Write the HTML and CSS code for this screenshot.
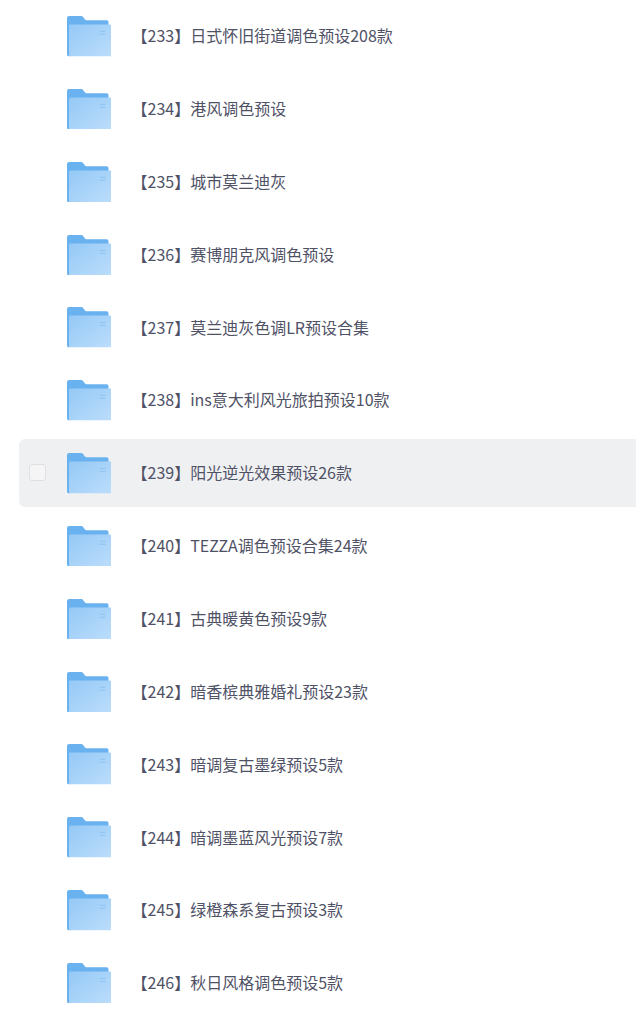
FILE: index.html
```html
<!DOCTYPE html>
<html lang="zh-CN">
<head>
    <meta charset="UTF-8">
    <meta name="viewport" content="width=device-width, initial-scale=1.0">
    <title>预设文件夹</title>
    <link rel="stylesheet" href="styles.css">
</head>
<body>

<svg class="defs" width="0" height="0">
    <defs>
        <linearGradient id="folderFront" x1="0" y1="0" x2="1" y2="1">
            <stop offset="0" stop-color="#94c9f6"/>
            <stop offset="1" stop-color="#bcddfb"/>
        </linearGradient>
        <symbol id="folder" viewBox="0 0 45 41">
            <path d="M0 2a2 2 0 0 1 2-2h12.5a2 2 0 0 1 1.6.8l1.8 2.6a2 2 0 0 0 1.6.8H40a2 2 0 0 1 2 2V12H3V41H2a2 2 0 0 1-2-2z" fill="#6ab2ef"/>
            <rect x="2" y="8.5" width="43" height="32.5" rx="1.5" fill="url(#folderFront)"/>
            <rect x="33" y="15" width="6" height="1" fill="#8cc3f2"/>
            <rect x="33" y="18" width="6" height="1" fill="#8cc3f2"/>
        </symbol>
    </defs>
</svg>

<ul class="file-list">
    <li class="file-row"><span class="check"></span><svg class="folder"><use href="#folder"/></svg><span class="name">【233】日式怀旧街道调色预设208款</span></li>
    <li class="file-row"><span class="check"></span><svg class="folder"><use href="#folder"/></svg><span class="name">【234】港风调色预设</span></li>
    <li class="file-row"><span class="check"></span><svg class="folder"><use href="#folder"/></svg><span class="name">【235】城市莫兰迪灰</span></li>
    <li class="file-row"><span class="check"></span><svg class="folder"><use href="#folder"/></svg><span class="name">【236】赛博朋克风调色预设</span></li>
    <li class="file-row"><span class="check"></span><svg class="folder"><use href="#folder"/></svg><span class="name">【237】莫兰迪灰色调LR预设合集</span></li>
    <li class="file-row"><span class="check"></span><svg class="folder"><use href="#folder"/></svg><span class="name">【238】ins意大利风光旅拍预设10款</span></li>
    <li class="file-row active"><span class="check"></span><svg class="folder"><use href="#folder"/></svg><span class="name">【239】阳光逆光效果预设26款</span></li>
    <li class="file-row"><span class="check"></span><svg class="folder"><use href="#folder"/></svg><span class="name">【240】TEZZA调色预设合集24款</span></li>
    <li class="file-row"><span class="check"></span><svg class="folder"><use href="#folder"/></svg><span class="name">【241】古典暖黄色预设9款</span></li>
    <li class="file-row"><span class="check"></span><svg class="folder"><use href="#folder"/></svg><span class="name">【242】暗香槟典雅婚礼预设23款</span></li>
    <li class="file-row"><span class="check"></span><svg class="folder"><use href="#folder"/></svg><span class="name">【243】暗调复古墨绿预设5款</span></li>
    <li class="file-row"><span class="check"></span><svg class="folder"><use href="#folder"/></svg><span class="name">【244】暗调墨蓝风光预设7款</span></li>
    <li class="file-row"><span class="check"></span><svg class="folder"><use href="#folder"/></svg><span class="name">【245】绿橙森系复古预设3款</span></li>
    <li class="file-row"><span class="check"></span><svg class="folder"><use href="#folder"/></svg><span class="name">【246】秋日风格调色预设5款</span></li>
</ul>

</body>
</html>
```

FILE: styles.css
```css
/* Base body styling */
body {
    font-family: "Noto Sans CJK SC", "Noto Sans", sans-serif;
    margin: 0;
    padding: 0;
    background-color: #fff;
}

.defs {
    position: absolute;
}

/* Folder list */
.file-list {
    display: flex;
    flex-direction: column;
    gap: 5.35px;
    list-style: none;
    margin: 2px 0 0 19px;
    padding: 0;
}

.file-row {
    display: flex;
    align-items: center;
    height: 67.5px;
    padding-left: 10px;
    border-radius: 6px 0 0 6px;
}

.file-row.active {
    background-color: #eff0f2;
}

/* Checkbox only shows on the active row */
.check {
    flex: none;
    box-sizing: border-box;
    width: 17px;
    height: 17px;
    margin-right: 20.5px;
    border-radius: 3px;
}

.active .check {
    background-color: #f5f5f6;
    border: 1px solid #dfe0e3;
}

.folder {
    flex: none;
    width: 44.5px;
    height: 40.5px;
    margin-top: 1px;
}

.name {
    margin-left: 20.5px;
    padding-bottom: 1px;
    font-size: 16px;
    color: #4f5266;
    white-space: nowrap;
}
```
